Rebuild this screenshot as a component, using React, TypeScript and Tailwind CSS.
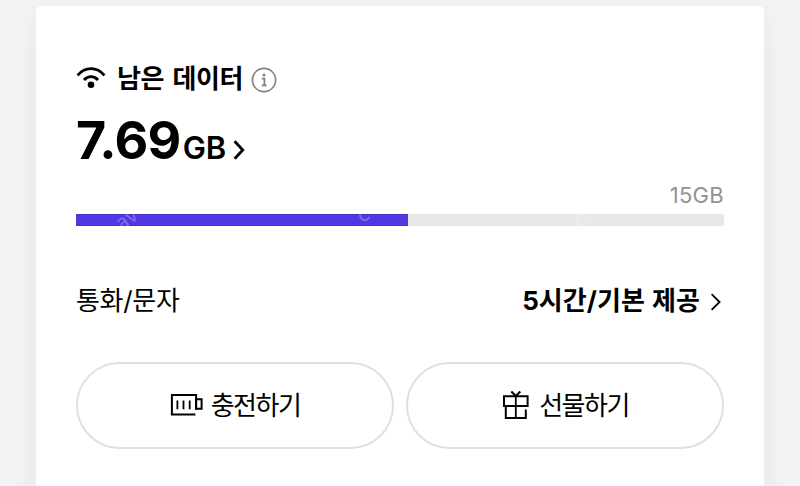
import type { ReactNode } from "react";

const TOTAL_WIDTH = 648;
const FILLED_WIDTH = 332;

function WifiIcon() {
  return (
    <svg width="30" height="22" viewBox="0 0 30 22" fill="none" className="shrink-0">
      <path d="M1.6 8.4C9 -0.6 21 -0.6 28.4 8.4" stroke="#000" strokeWidth="2.8" />
      <path d="M8 13C12 8.6 18 8.6 22 13" stroke="#000" strokeWidth="2.8" />
      <circle cx="15" cy="17.8" r="3.3" fill="#000" />
    </svg>
  );
}

function InfoIcon() {
  return (
    <svg width="26" height="26" viewBox="0 0 26 26" fill="none" className="shrink-0">
      <circle cx="13" cy="13" r="11.6" stroke="#808080" strokeWidth="1.6" />
      <path d="M10.8 11.6h2.6v6.8M10.8 18.4h4.8" stroke="#808080" strokeWidth="1.7" />
      <circle cx="13" cy="8" r="1.5" fill="#808080" />
    </svg>
  );
}

function BatteryIcon() {
  return (
    <svg width="34" height="24" viewBox="0 0 34 24" fill="none" stroke="#000" className="shrink-0">
      <path d="M25.4 21.4H1.9V2h24.2v14.8" strokeWidth="2" />
      <path d="M26.1 6.3h5.5v9.5h-5.5z" strokeWidth="2" />
      <path d="M7.4 7.4v8.8M13.5 7.4v8.8M19.7 7.4v8.8" strokeWidth="1.8" />
    </svg>
  );
}

function GiftIcon() {
  return (
    <svg width="28" height="30" viewBox="0 0 28 30" fill="none" stroke="#000" className="shrink-0">
      <path d="M2 6.3h23.6v9.8H2z" strokeWidth="2" />
      <path d="M3.8 16.1v11.8h20v-8.4" strokeWidth="2" />
      <path d="M13.8 6.3v21.6" strokeWidth="1.8" />
      <path d="M9.3 1.6l4.5 4.5 4.5-4.5" strokeWidth="2.1" />
    </svg>
  );
}

function ActionButton({ icon, label }: { icon: ReactNode; label: string }) {
  return (
    <button className="flex h-[87px] flex-1 items-center justify-center rounded-full border-2 border-[#e0e0e0] bg-white">
      {icon}
      <span className="pb-1 text-[26px] leading-none tracking-[-1.5px]">{label}</span>
    </button>
  );
}

export default function App() {
  return (
    <div className="h-[486px] w-[800px] overflow-hidden bg-[#f3f3f5] px-9 pt-1.5 font-['Noto_Sans_CJK_KR',sans-serif] text-black">
      <main className="h-[500px] rounded-[5px] bg-white px-10 pt-[55px] shadow-[0_8px_28px_rgba(0,0,0,0.06)]">
        <div className="flex h-8 items-center">
          <span className="mt-px">
            <WifiIcon />
          </span>
          <h1 className="ml-[11px] text-[26px] leading-8 font-bold tracking-[-0.4px] [word-spacing:3px]">남은 데이터</h1>
          <span className="mt-1.5 ml-2">
            <InfoIcon />
          </span>
        </div>

        <div className="mt-4 flex h-[64px] items-baseline font-[Inter,sans-serif] leading-[64px]">
          <span className="text-[52px] font-bold tracking-[-0.6px]">7.69</span>
          <span className="ml-0.5 text-[31px] font-semibold tracking-[-0.3px]">GB</span>
          <svg width="12" height="20" viewBox="0 0 12 20" fill="none" className="ml-[7px] translate-y-[1px]">
            <path d="M1.6 1.2l8.2 8.8-8.2 8.8" stroke="#000" strokeWidth="2.8" />
          </svg>
        </div>

        <p className="mt-[10px] h-6 text-right font-[Inter,sans-serif] text-[22px] leading-6 tracking-[0.3px] text-[#929292]">15GB</p>

        <div className="relative mt-[7px] h-3 overflow-hidden bg-[#e8e8e8]" style={{ width: TOTAL_WIDTH }}>
          <div className="h-3 border-y border-[#432fc9] bg-[#5038e3]" style={{ width: FILLED_WIDTH }} />
          {/* faint repeating mark */}
          <span className="absolute -top-2 left-[39px] -rotate-35 text-[20px] leading-6 text-white/30">av</span>
          <span className="absolute -top-3 left-[281px] -rotate-35 text-[20px] leading-6 text-white/30">c</span>
          <span className="absolute -top-2 left-[498px] -rotate-35 text-[20px] leading-6 text-white/30">c</span>
        </div>

        <div className="mt-[55px] flex h-10 items-center justify-between font-[Inter,'Noto_Sans_CJK_KR',sans-serif] text-[26px] leading-10">
          <span className="tracking-[-0.3px]">통화/문자</span>
          <span className="flex items-center font-bold tracking-[0.05px] [word-spacing:1px]">
            5시간/기본 제공
            <svg width="12" height="18" viewBox="0 0 12 18" fill="none" className="mt-[2px] mr-[2px] ml-[10px]">
              <path d="M1.6 1.2l8 7.8-8 7.8" stroke="#000" strokeWidth="1.8" />
            </svg>
          </span>
        </div>

        <div className="mt-[41px] flex gap-3">
          <ActionButton icon={<span className="mr-[7px] -mt-0.5"><BatteryIcon /></span>} label="충전하기" />
          <ActionButton icon={<span className="mr-[9px] -mt-0.5 ml-px"><GiftIcon /></span>} label="선물하기" />
        </div>
      </main>
    </div>
  );
}
